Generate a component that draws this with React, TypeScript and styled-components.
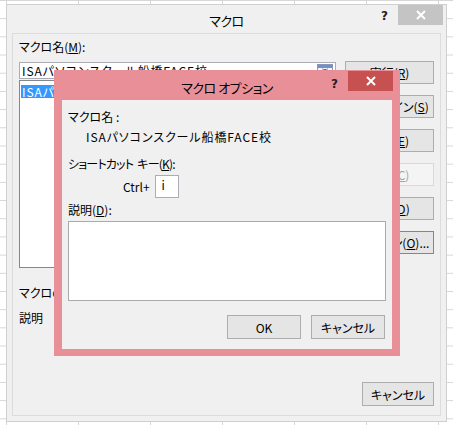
import React from "react";
import styled, { createGlobalStyle } from "styled-components";

const Global = createGlobalStyle`
  html, body { margin: 0; padding: 0; }
  body {
    width: 453px;
    height: 425px;
    overflow: hidden;
    background-color: #ffffff;
    background-image:
      linear-gradient(to right, #d6d6d6 1px, transparent 1px),
      linear-gradient(to bottom, #d6d6d6 1px, transparent 1px);
    background-size: 72px 18.2px;
    background-position: 6px 0px;
    font-family: "Noto Sans CJK JP", "Noto Sans", sans-serif;
    font-size: 12px;
    font-feature-settings: "palt" 1;
    color: #000;
  }
  u { text-underline-offset: 1px; }
`;

const Stage = styled.div`
  position: relative;
  width: 453px;
  height: 425px;
  padding: 4px 0 0 6px;
  box-sizing: border-box;
`;

const Window = styled.div`
  width: 441px;
  height: 418px;
  box-sizing: border-box;
  background: #f0f0f0;
  border: 1px solid #cfcfcf;
  display: flex;
  flex-direction: column;
`;

const TitleBar = styled.div<{ $h: number }>`
  height: ${(p) => p.$h}px;
  flex: none;
  display: grid;
  grid-template-columns: 1fr auto 1fr;
  align-items: start;
`;

const TitleText = styled.div<{ $pt: number }>`
  grid-column: 2;
  padding-top: ${(p) => p.$pt}px;
  font-size: 13px;
  line-height: 18px;
  letter-spacing: -0.5px;
  white-space: nowrap;
`;

const TitleControls = styled.div<{ $mr: number }>`
  grid-column: 3;
  justify-self: end;
  display: flex;
  align-items: flex-start;
  margin-right: ${(p) => p.$mr}px;
`;

const Help = styled.div<{ $pt: number }>`
  font-family: "DejaVu Sans", sans-serif;
  font-weight: bold;
  font-size: 12px;
  line-height: 12px;
  padding-top: ${(p) => p.$pt}px;
  margin-right: 10px;
  color: #222;
`;

const CloseBtn = styled.div<{ $bg: string; $mt: number }>`
  width: 45px;
  height: 20px;
  margin-top: ${(p) => p.$mt}px;
  background: ${(p) => p.$bg};
  display: flex;
  align-items: center;
  justify-content: center;
`;

const ClientArea = styled.div`
  flex: 1;
  margin: 0 5px 5px;
  border: 1px solid #dcdcdc;
  display: grid;
  grid-template-columns: 317px 89px;
  column-gap: 9px;
  padding: 0 6px;
`;

const LeftCol = styled.div`
  display: flex;
  flex-direction: column;
  padding-top: 5px;
`;

const Label = styled.div<{ $mt?: number; $pl?: number; $ls?: number }>`
  line-height: 16px;
  margin-top: ${(p) => p.$mt ?? 0}px;
  padding-left: ${(p) => p.$pl ?? 0}px;
  letter-spacing: ${(p) => p.$ls ?? 0}px;
  white-space: nowrap;
`;

const NameText = styled.span`
  letter-spacing: 0.9px;
  white-space: nowrap;
`;

const Gap = styled.span`
  display: inline-block;
  width: 4px;
`;

const NameInput = styled.div`
  margin-top: 7px;
  height: 17px;
  box-sizing: border-box;
  border: 1px solid #abadb3;
  background: #fff;
  display: flex;
  align-items: center;
  padding-left: 2px;
  justify-content: space-between;
  line-height: 15px;
`;

const RefIcon = styled.div`
  width: 17px;
  height: 15px;
  display: flex;
  align-items: center;
  justify-content: center;
  margin-right: 2px;
`;

const ListBox = styled.div`
  margin-top: 1px;
  height: 188px;
  box-sizing: border-box;
  border: 1px solid #828790;
  background: #fff;
  padding: 4px 1px;
`;

const ListItem = styled.div<{ $sel?: boolean }>`
  line-height: 13px;
  padding: 0 1px;
  background: ${(p) => (p.$sel ? "#3399ff" : "transparent")};
  color: ${(p) => (p.$sel ? "#fff" : "#000")};
  white-space: nowrap;
  overflow: hidden;
`;

const RightCol = styled.div`
  display: flex;
  flex-direction: column;
  gap: 11px;
  padding-top: 27px;
  padding-bottom: 9px;
`;

const Button = styled.div<{ $w?: number; $h?: number; $focus?: boolean; $disabled?: boolean }>`
  width: ${(p) => p.$w ?? 89}px;
  height: ${(p) => p.$h ?? 23}px;
  box-sizing: border-box;
  border: 1px solid
    ${(p) => (p.$focus ? "#3399ff" : p.$disabled ? "#d9d9d9" : "#adadad")};
  background: ${(p) => (p.$disabled ? "#f4f4f4" : "#e5e5e5")};
  color: ${(p) => (p.$disabled ? "#a3a3a3" : "#000")};
  display: flex;
  align-items: center;
  justify-content: center;
  white-space: nowrap;
  flex: none;
`;

const BottomBtn = styled(Button)`
  margin-top: auto;
  align-self: flex-end;
`;

/* modal */
const Modal = styled.div`
  position: absolute;
  left: 54px;
  top: 70px;
  width: 346px;
  height: 286px;
  box-sizing: border-box;
  background: #e98f98;
  padding: 0 8px 7px;
  display: flex;
  flex-direction: column;
`;

const ModalTitleBar = styled(TitleBar)`
  margin: 0 -8px;
`;

const Panel = styled.div`
  flex: 1;
  background: #f0f0f0;
  padding: 0 6px;
  display: flex;
  flex-direction: column;
`;

const ShortcutRow = styled.div`
  margin-top: 3px;
  padding-left: 55px;
  display: flex;
  align-items: center;
  gap: 5px;
`;

const KeyBox = styled.div`
  width: 24px;
  height: 23px;
  box-sizing: border-box;
  border: 1px solid #abadb3;
  background: #fff;
  padding: 1px 0 0 6px;
  line-height: 16px;
`;

const DescBox = styled.div`
  margin-top: 3px;
  width: 318px;
  height: 80px;
  box-sizing: border-box;
  border: 1px solid #ababab;
  background: #fff;
`;

const ButtonRow = styled.div`
  margin-top: 14px;
  margin-right: 1px;
  display: flex;
  justify-content: flex-end;
  gap: 10px;
`;

const XMark = ({ color }: { color: string }) => (
  <svg width="10" height="10" viewBox="0 0 10 10">
    <path d="M1 1 L9 9 M9 1 L1 9" stroke={color} strokeWidth="2" />
  </svg>
);

const RangeGlyph = () => (
  <svg width="16" height="13" viewBox="0 0 16 13">
    <rect x="0.5" y="0.5" width="15" height="12" fill="#f4f6fb" stroke="#8a96b8" />
    <rect x="1" y="1" width="14" height="3" fill="#6f8fcf" />
    <path d="M1 7.5 H15 M1 10.5 H15 M5.5 4 V12 M10.5 4 V12" stroke="#b7c0d8" strokeWidth="1" />
    <path d="M6 5 L10 5 L8 8 Z" fill="#e03a2a" />
  </svg>
);

const NAME = "ISAパソコンスクール船橋FACE校";

export default function App() {
  return (
    <>
      <Global />
      <Stage>
        <Window>
          <TitleBar $h={28}>
            <TitleText $pt={7}>マクロ</TitleText>
            <TitleControls $mr={3}>
              <Help $pt={5}>?</Help>
              <CloseBtn $bg="#c4c4c4" $mt={0}>
                <XMark color="#ffffff" />
              </CloseBtn>
            </TitleControls>
          </TitleBar>
          <ClientArea>
            <LeftCol>
              <Label>
                マクロ名(<u>M</u>):
              </Label>
              <NameInput>
                <NameText>{NAME}</NameText>
                <RefIcon>
                  <RangeGlyph />
                </RefIcon>
              </NameInput>
              <ListBox>
                <ListItem $sel>
                  <NameText>{NAME}</NameText>
                </ListItem>
              </ListBox>
              <Label $mt={17}>
                マクロの保存先(<u>A</u>):
              </Label>
              <Label $mt={9}>説明</Label>
            </LeftCol>
            <RightCol>
              <Button>
                実行(<u>R</u>)
              </Button>
              <Button>
                ステップイン(<u>S</u>)
              </Button>
              <Button>
                編集(<u>E</u>)
              </Button>
              <Button $disabled>
                作成(<u>C</u>)
              </Button>
              <Button>
                削除(<u>D</u>)
              </Button>
              <Button $focus>
                オプション(<u>O</u>)...
              </Button>
              <BottomBtn $w={72} $h={24}>
                キャンセル
              </BottomBtn>
            </RightCol>
          </ClientArea>
        </Window>

        <Modal>
          <ModalTitleBar $h={30}>
            <TitleText $pt={9}>マクロ オプション</TitleText>
            <TitleControls $mr={7}>
              <Help $pt={8}>?</Help>
              <CloseBtn $bg="#c75050" $mt={1}>
                <XMark color="#ffffff" />
              </CloseBtn>
            </TitleControls>
          </ModalTitleBar>
          <Panel>
            <Label $mt={9}>マクロ名 :</Label>
            <Label $mt={4} $pl={18}>
              <NameText>{NAME}</NameText>
            </Label>
            <Label $mt={11} $ls={-0.8}>
              ショートカット<Gap />キー(<u>K</u>):
            </Label>
            <ShortcutRow>
              <span>Ctrl+</span>
              <KeyBox>i</KeyBox>
            </ShortcutRow>
            <Label $mt={4}>
              説明(<u>D</u>):
            </Label>
            <DescBox />
            <ButtonRow>
              <Button $w={74} $h={24}>
                OK
              </Button>
              <Button $w={74} $h={24}>
                キャンセル
              </Button>
            </ButtonRow>
          </Panel>
        </Modal>
      </Stage>
    </>
  );
}
